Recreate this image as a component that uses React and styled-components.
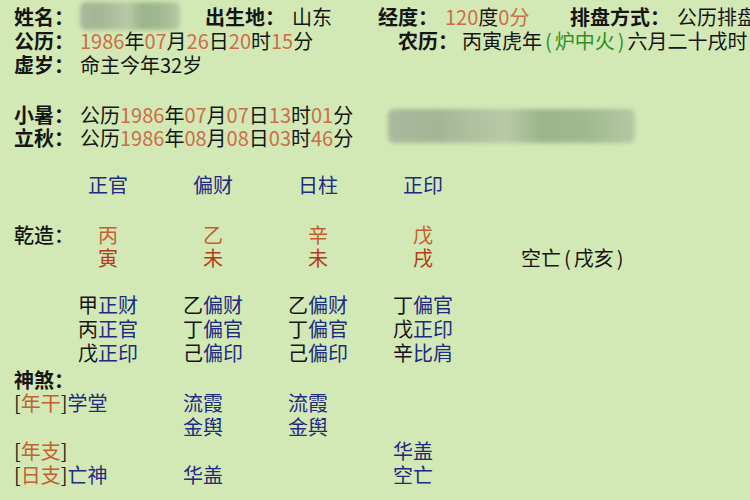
import React from 'react'
import styled, { createGlobalStyle } from 'styled-components'

const GlobalStyle = createGlobalStyle`
  html, body {
    margin: 0;
    padding: 0;
    background: #d3e9b5;
    overflow: hidden;
  }
`

const Page = styled.div`
  width: 750px;
  height: 500px;
  box-sizing: border-box;
  padding: 4px 0 0 14px;
  background: #d3e9b5;
  font-family: "Noto Sans CJK SC", "Noto Sans", sans-serif;
  font-size: 20px;
  color: #151515;
  white-space: nowrap;
  overflow: hidden;
  display: flex;
  flex-direction: column;
`

const Line = styled.div`
  display: flex;
  align-items: center;
  height: ${(p) => p.h || 24}px;
  margin-top: ${(p) => p.mt || 0}px;
`

const Field = styled.div`
  display: flex;
  align-items: center;
  width: ${(p) => (p.w ? p.w + 'px' : 'auto')};
  flex-shrink: 0;
`

const Label = styled.span`
  font-weight: 700;
  font-size: 20px;
  margin-right: ${(p) => p.gap ?? 6}px;
`

const Num = styled.span`
  color: #cd6c48;
`

const Green = styled.span`
  color: #2f8f2a;
`

const Paren = styled.span`
  padding: 0 3px;
`

const Blur = styled.div`
  width: ${(p) => p.w}px;
  height: ${(p) => p.h}px;
  border-radius: 6px;
  background: linear-gradient(
    90deg,
    #a9b99c 0%,
    #a4b596 20%,
    #afc19f 35%,
    #b7c9a6 48%,
    #9cb58c 62%,
    #a0b990 80%,
    #b4c9a4 100%
  );
  filter: blur(2px);
  flex-shrink: 0;
`

const SolarBlock = styled.div`
  display: flex;
  align-items: center;
  margin-top: 27px;
`

const SolarLines = styled.div`
  display: flex;
  flex-direction: column;
  width: 374px;
`

const Chart = styled.div`
  display: grid;
  grid-template-columns: 64px repeat(4, 105px) auto;
  align-items: start;
  margin-top: ${(p) => p.mt || 0}px;
`

const GodHead = styled.div`
  width: 60px;
  text-align: center;
  line-height: 24px;
  color: #1d2b82;
`

const SideLabel = styled.div`
  line-height: 23px;
  font-weight: 500;
`

const Pillar = styled.div`
  width: 60px;
  display: flex;
  flex-direction: column;
  align-items: center;
  line-height: 23px;
`

const Stem = styled.span`
  color: #c45e30;
`

const Branch = styled.span`
  color: #b23c1a;
`

const Void = styled.div`
  padding-top: 23px;
  line-height: 23px;
  margin-left: 23px;
`

const HiddenCol = styled.div`
  display: flex;
  flex-direction: column;
  line-height: 24px;
`

const God = styled.span`
  color: #1d2b82;
`

const Tag = styled.span`
  color: #222;
  & b {
    font-weight: 400;
    color: #c4602e;
  }
`

const Star = styled.div`
  display: flex;
  flex-direction: column;
  line-height: 24px;
  color: #1d2b82;
  grid-column: ${(p) => p.span || 'auto'};
`

const pillars = [
  { god: '正官', stem: '丙', branch: '寅', hidden: [['甲', '正财'], ['丙', '正官'], ['戊', '正印']] },
  { god: '偏财', stem: '乙', branch: '未', hidden: [['乙', '偏财'], ['丁', '偏官'], ['己', '偏印']] },
  { god: '日柱', stem: '辛', branch: '未', hidden: [['乙', '偏财'], ['丁', '偏官'], ['己', '偏印']] },
  { god: '正印', stem: '戊', branch: '戌', hidden: [['丁', '偏官'], ['戊', '正印'], ['辛', '比肩']] },
]

function Bracket({ name }) {
  return (
    <Tag>
      [<b>{name}</b>]
    </Tag>
  )
}

export default function App() {
  return (
    <>
      <GlobalStyle />
      <Page>
        <Line>
          <Field w={191}>
            <Label>姓名：</Label>
            <Blur w={100} h={28} />
          </Field>
          <Field w={173}>
            <Label gap={7}>出生地：</Label>
            <span>山东</span>
          </Field>
          <Field w={192}>
            <Label gap={7}>经度：</Label>
            <span><Num>120</Num>度<Num>0分</Num></span>
          </Field>
          <Field>
            <Label gap={7}>排盘方式：</Label>
            <span>公历排盘</span>
          </Field>
        </Line>
        <Line>
          <Field w={384}>
            <Label>公历：</Label>
            <span>
              <Num>1986</Num>年<Num>07</Num>月<Num>26</Num>日<Num>20</Num>时<Num>15</Num>分
            </span>
          </Field>
          <Field>
            <Label gap={4}>农历：</Label>
            <span>
              丙寅虎年<Green><Paren>(</Paren>炉中火<Paren>)</Paren></Green>六月二十戌时
            </span>
          </Field>
        </Line>
        <Line>
          <Label>虚岁：</Label>
          <span>命主今年32岁</span>
        </Line>

        <SolarBlock>
          <SolarLines>
            <Line h={23}>
              <Label>小暑：</Label>
              <span>
                公历<Num>1986</Num>年<Num>07</Num>月<Num>07</Num>日<Num>13</Num>时<Num>01</Num>分
              </span>
            </Line>
            <Line h={23}>
              <Label>立秋：</Label>
              <span>
                公历<Num>1986</Num>年<Num>08</Num>月<Num>08</Num>日<Num>03</Num>时<Num>46</Num>分
              </span>
            </Line>
          </SolarLines>
          <Blur w={247} h={34} />
        </SolarBlock>

        <Chart mt={24}>
          <div />
          {pillars.map((p) => (
            <GodHead key={p.god}>{p.god}</GodHead>
          ))}
        </Chart>

        <Chart mt={26}>
          <SideLabel>乾造：</SideLabel>
          {pillars.map((p, i) => (
            <Pillar key={i}>
              <Stem>{p.stem}</Stem>
              <Branch>{p.branch}</Branch>
            </Pillar>
          ))}
          <Void>空亡<Paren>(</Paren>戌亥<Paren>)</Paren></Void>
        </Chart>

        <Chart mt={24}>
          <div />
          {pillars.map((p, i) => (
            <HiddenCol key={i}>
              {p.hidden.map(([s, g], j) => (
                <span key={j}>
                  {s}
                  <God>{g}</God>
                </span>
              ))}
            </HiddenCol>
          ))}
        </Chart>

        <Line mt={2}>
          <Label>神煞：</Label>
        </Line>

        <Chart>
          <Star span="1 / 3">
            <span>
              <Bracket name="年干" />
              <God>学堂</God>
            </span>
            <span>&nbsp;</span>
            <Bracket name="年支" />
            <span>
              <Bracket name="日支" />
              <God>亡神</God>
            </span>
          </Star>
          <Star>
            <span>流霞</span>
            <span>金舆</span>
            <span>&nbsp;</span>
            <span>华盖</span>
          </Star>
          <Star>
            <span>流霞</span>
            <span>金舆</span>
          </Star>
          <Star>
            <span>&nbsp;</span>
            <span>&nbsp;</span>
            <span>华盖</span>
            <span>空亡</span>
          </Star>
        </Chart>
      </Page>
    </>
  )
}
